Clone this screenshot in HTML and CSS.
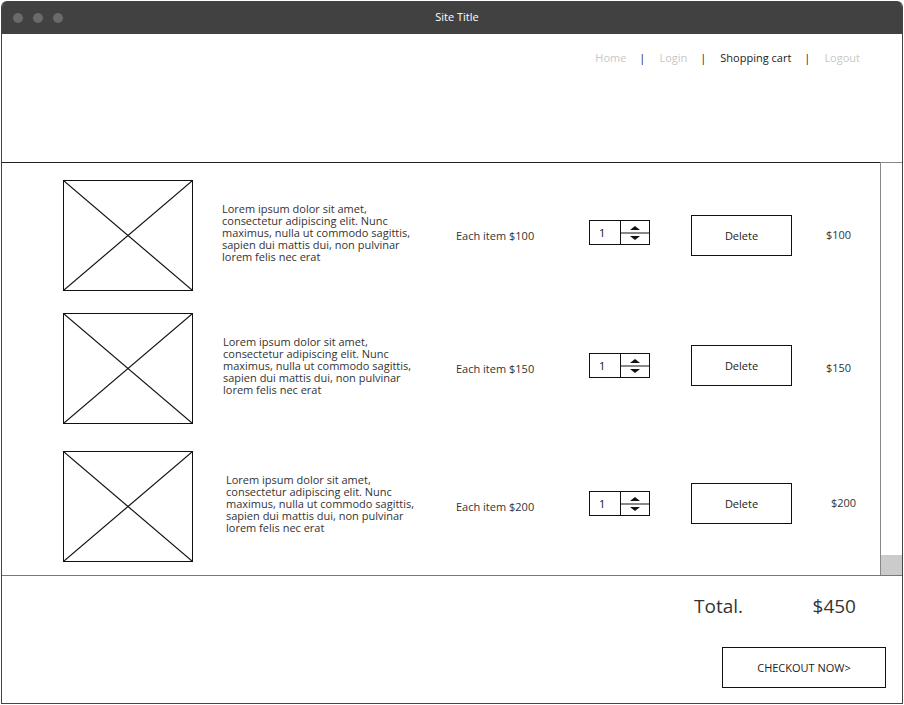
FILE: index.html
```html
<!DOCTYPE html>
<html lang="en">
<head>
  <meta charset="UTF-8">
  <title>Site Title</title>
  <link rel="stylesheet" href="styles.css">
</head>
<body>
  <div class="window">
    <div class="titlebar">
      <div class="dots"><span></span><span></span><span></span></div>
      <div class="title">Site Title</div>
    </div>

    <header class="header">
      <nav class="nav">
        <a href="#">Home</a>
        <span class="sep">|</span>
        <a href="#">Login</a>
        <span class="sep">|</span>
        <a href="#" class="active">Shopping cart</a>
        <span class="sep">|</span>
        <a href="#">Logout</a>
      </nav>
    </header>

    <section class="cart">
      <div class="items">
        <div class="row">
          <div class="thumb">
            <svg viewBox="0 0 130 111" preserveAspectRatio="none"><line x1="0" y1="0" x2="130" y2="111"/><line x1="130" y1="0" x2="0" y2="111"/></svg>
          </div>
          <p class="desc">Lorem ipsum dolor sit amet, consectetur adipiscing elit. Nunc maximus, nulla ut commodo sagittis, sapien dui mattis dui, non pulvinar lorem felis nec erat</p>
          <div class="each">Each item $100</div>
          <div class="spin">
            <span class="val">1</span>
            <span class="arrows"><i class="up"></i><i class="down"></i></span>
          </div>
          <button class="delete">Delete</button>
          <div class="price">$100</div>
        </div>

        <div class="row">
          <div class="thumb">
            <svg viewBox="0 0 130 111" preserveAspectRatio="none"><line x1="0" y1="0" x2="130" y2="111"/><line x1="130" y1="0" x2="0" y2="111"/></svg>
          </div>
          <p class="desc">Lorem ipsum dolor sit amet, consectetur adipiscing elit. Nunc maximus, nulla ut commodo sagittis, sapien dui mattis dui, non pulvinar lorem felis nec erat</p>
          <div class="each">Each item $150</div>
          <div class="spin">
            <span class="val">1</span>
            <span class="arrows"><i class="up"></i><i class="down"></i></span>
          </div>
          <button class="delete">Delete</button>
          <div class="price">$150</div>
        </div>

        <div class="row last">
          <div class="thumb">
            <svg viewBox="0 0 130 111" preserveAspectRatio="none"><line x1="0" y1="0" x2="130" y2="111"/><line x1="130" y1="0" x2="0" y2="111"/></svg>
          </div>
          <p class="desc">Lorem ipsum dolor sit amet, consectetur adipiscing elit. Nunc maximus, nulla ut commodo sagittis, sapien dui mattis dui, non pulvinar lorem felis nec erat</p>
          <div class="each">Each item $200</div>
          <div class="spin">
            <span class="val">1</span>
            <span class="arrows"><i class="up"></i><i class="down"></i></span>
          </div>
          <button class="delete">Delete</button>
          <div class="price">$200</div>
        </div>
      </div>
      <div class="scrollbar"><div class="thumb-bar"></div></div>
    </section>

    <footer class="summary">
      <div class="total">
        <span>Total.</span>
        <span class="amount">$450</span>
      </div>
      <button class="checkout">CHECKOUT NOW&gt;</button>
    </footer>
  </div>
</body>
</html>
```

FILE: styles.css
```css
* {
  box-sizing: border-box;
}

body {
  margin: 0;
  background: white;
  font-family: "Open Sans", Lato, sans-serif;
  color: #333;
}

.window {
  margin: 1px 0 0 1px;
  width: 902px;
  height: 703px;
  border: 1px solid #444;
  border-top: none;
  border-radius: 6px 6px 0 0;
  display: flex;
  flex-direction: column;
  overflow: hidden;
}

.titlebar {
  height: 33px;
  background: #414141;
  display: flex;
  align-items: center;
  position: relative;
  flex-shrink: 0;
}

.dots {
  display: flex;
  gap: 10px;
  padding-left: 11px;
}

.dots span {
  width: 10px;
  height: 10px;
  border-radius: 50%;
  background: #6a6a6a;
}

.title {
  position: absolute;
  left: 10px;
  right: 0;
  top: 8px;
  text-align: center;
  color: white;
  font-size: 11px;
}

.header {
  height: 128px;
  flex-shrink: 0;
  display: flex;
  justify-content: flex-end;
  align-items: flex-start;
  padding: 16px 42px 0 0;
}

.nav {
  display: flex;
  font-size: 11px;
  line-height: 15px;
}

.nav a {
  color: #c8c8c8;
  text-decoration: none;
}

.nav a.active {
  color: #222;
}

.nav .sep {
  color: #222;
  padding: 0 14px 0 13px;
}

.cart {
  height: 414px;
  display: flex;
  flex-shrink: 0;
  border-bottom: 1px solid #777;
}

.items {
  flex: 1;
  border-top: 1px solid #222;
  padding: 17px 0 0 61px;
}

.scrollbar {
  width: 22px;
  border-top: 1px solid #888;
  border-left: 1px solid #888;
  display: flex;
  flex-direction: column;
  justify-content: flex-end;
}

.thumb-bar {
  height: 20px;
  background: #cbcbcb;
}

.row {
  display: flex;
  align-items: center;
  height: 111px;
  margin-bottom: 22px;
}

.row.last {
  margin-top: 27px;
}

.thumb {
  width: 130px;
  height: 111px;
  border: 1.5px solid #111;
  flex-shrink: 0;
}

.thumb svg {
  display: block;
  width: 100%;
  height: 100%;
  stroke: #111;
  stroke-width: 1.2;
}

.desc {
  width: 192px;
  margin: 0 0 6px 29px;
  font-size: 11px;
  line-height: 12px;
  color: #333;
}

.row + .row .desc {
  margin-left: 30px;
}

.row.last .desc {
  margin-left: 33px;
}

.each {
  width: 133px;
  margin-left: 42px;
  font-size: 11px;
  color: #333;
}

.row + .row .each {
  margin-left: 41px;
}

.row.last .each {
  margin-left: 38px;
}

.spin {
  width: 61px;
  height: 25px;
  margin-bottom: 6px;
  border: 1px solid #111;
  display: flex;
  font-size: 11px;
}

.spin .val {
  width: 31px;
  border-right: 1px solid #111;
  padding: 4px 0 0 9px;
  color: #111;
}

.spin .arrows {
  flex: 1;
  display: flex;
  flex-direction: column;
  justify-content: space-between;
  align-items: center;
  padding: 5px 0 4px;
  background: linear-gradient(#fff 11px, #888 11px, #888 13px, #fff 13px);
}

.spin i {
  width: 0;
  height: 0;
  border-left: 5px solid transparent;
  border-right: 5px solid transparent;
}

.spin .up {
  border-bottom: 4px solid #111;
}

.spin .down {
  border-top: 4px solid #111;
}

.delete {
  width: 101px;
  height: 41px;
  margin-left: 41px;
  border: 1px solid #111;
  background: white;
  font-family: inherit;
  font-size: 11px;
  color: #222;
  padding: 0;
}

.row + .row .delete {
  margin-bottom: 6px;
}

.price {
  margin: 0 0 3px 34px;
  font-size: 11px;
  color: #333;
}

.row.last .price {
  margin: 0 0 8px 39px;
}

.summary {
  flex: 1;
  display: flex;
  flex-direction: column;
  align-items: flex-end;
  padding: 17px 16px 0 0;
}

.total {
  display: flex;
  width: 162px;
  justify-content: space-between;
  margin-right: 30px;
  font-size: 19px;
  line-height: 26px;
  color: #333;
}

.checkout {
  margin-top: 28px;
  width: 164px;
  height: 41px;
  border: 1px solid #111;
  background: white;
  font-family: inherit;
  font-size: 11px;
  color: #222;
}
```
